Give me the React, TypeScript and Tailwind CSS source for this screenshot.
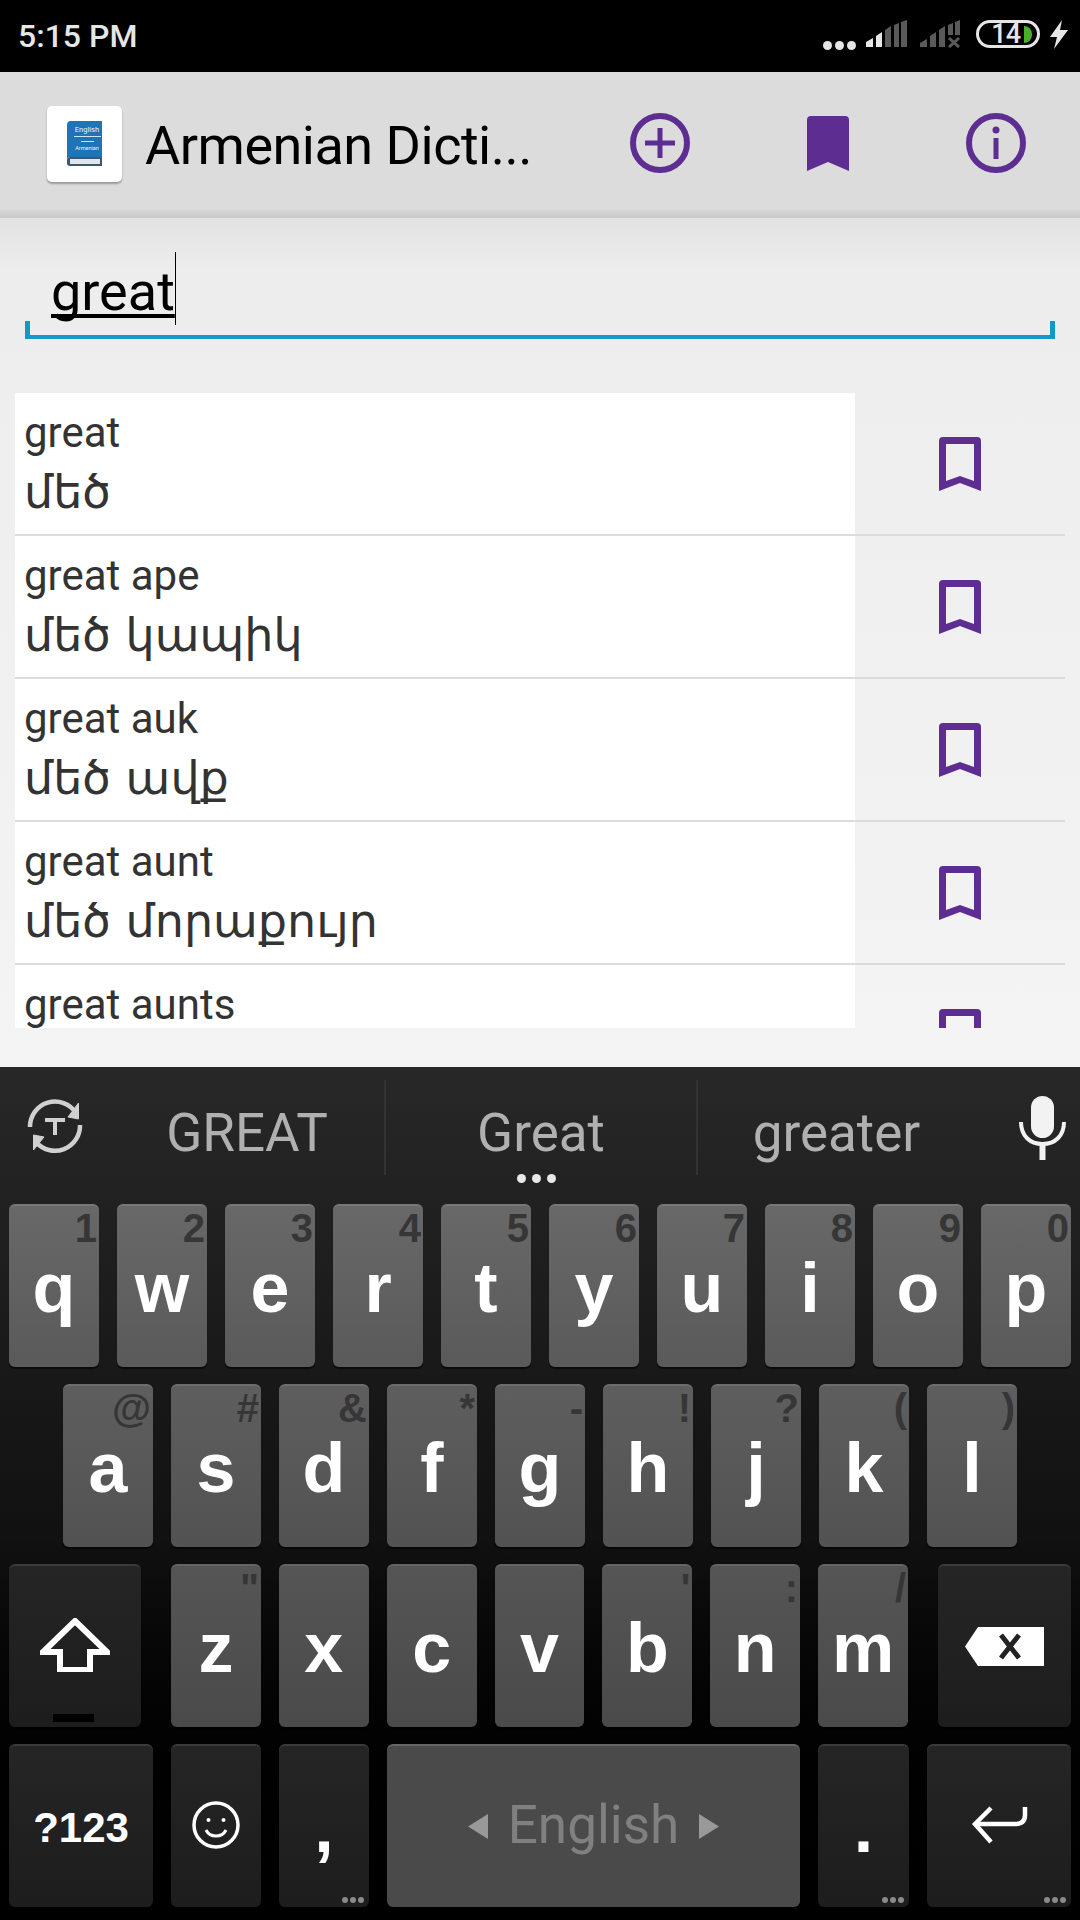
import React from 'react';

const entries = [
  { en: 'great', hy: 'մեծ' },
  { en: 'great ape', hy: 'մեծ կապիկ' },
  { en: 'great auk', hy: 'մեծ ավք' },
  { en: 'great aunt', hy: 'մեծ մորաքույր' },
  { en: 'great aunts', hy: '' },
];

const rowOne = [['q', '1'], ['w', '2'], ['e', '3'], ['r', '4'], ['t', '5'], ['y', '6'], ['u', '7'], ['i', '8'], ['o', '9'], ['p', '0']];
const rowTwo = [['a', '@'], ['s', '#'], ['d', '&'], ['f', '*'], ['g', '-'], ['h', '!'], ['j', '?'], ['k', '('], ['l', ')']];
const rowThree = [['z', '"'], ['x', ''], ['c', ''], ['v', ''], ['b', "'"], ['n', ':'], ['m', '/']];

const PURPLE = '#5e2d91';

function MoreDots() {
  return (
    <div className="absolute right-[5px] bottom-[4px] flex gap-[2px]">
      <span className="w-[6px] h-[6px] rounded-full bg-[#8a8a8a]" />
      <span className="w-[6px] h-[6px] rounded-full bg-[#8a8a8a]" />
      <span className="w-[6px] h-[6px] rounded-full bg-[#8a8a8a]" />
    </div>
  );
}

function LetterKey({ letter, alt, tone }: { letter: string; alt: string; tone: string }) {
  return (
    <div className={`relative flex-1 h-[163px] rounded-[6px] border-t-2 flex justify-center pt-[47px] shadow-[0_2px_1px_rgba(0,0,0,0.6)] ${tone}`}>
      <span className="text-[70px] leading-[70px] font-bold text-white font-['Liberation_Sans',sans-serif]">{letter}</span>
      {alt && (
        <span className="absolute top-[2px] right-[2px] text-[40px] leading-[40px] font-bold text-[#363636] font-['Liberation_Sans',sans-serif]">{alt}</span>
      )}
    </div>
  );
}

function DarkKey({ className, children }: { className: string; children: React.ReactNode }) {
  return (
    <div className={`relative h-[163px] rounded-[6px] border-t-2 border-[#3a3a3a] bg-linear-to-b from-[#252525] to-[#1d1d1d] flex justify-center shadow-[0_2px_1px_rgba(0,0,0,0.6)] ${className}`}>
      {children}
    </div>
  );
}

function BookIcon() {
  return (
    <svg width="36" height="46" viewBox="0 0 36 46">
      <path d="M4 0H35V36H3Q0 36 0 39V4Q0 0 4 0Z" fill="#1f74b8" />
      <path d="M0 39Q0 36 3 36H35V45H3Q0 45 0 42Z" fill="#41566a" />
      <rect x="3" y="38" width="30" height="5" fill="#dfe6ec" />
      <text x="20" y="11" fontSize="7.5" fill="#e8f2fa" textAnchor="middle" fontFamily="Roboto, sans-serif">English</text>
      <rect x="7" y="15" width="27" height="1" fill="#cfe4f5" />
      <rect x="14" y="20" width="13" height="1" fill="#cfe4f5" />
      <text x="20" y="29" fontSize="5.5" fill="#e8f2fa" textAnchor="middle" fontFamily="Roboto, sans-serif">Armenian</text>
    </svg>
  );
}

function StatusIcons() {
  return (
    <div className="flex items-center">
      <div className="flex gap-[3px] mt-[19px] mr-[10px]">
        <span className="w-[9px] h-[9px] rounded-full bg-[#e6e6e6]" />
        <span className="w-[9px] h-[9px] rounded-full bg-[#e6e6e6]" />
        <span className="w-[9px] h-[9px] rounded-full bg-[#e6e6e6]" />
      </div>
      <svg width="41" height="28" viewBox="0 0 41 28" className="mr-[13px] mt-[-4px]">
        <path d="M0 27V22L7 18V27Z" fill="#e6e6e6" />
        <path d="M10 27V16L16 12V27Z" fill="#e6e6e6" />
        <path d="M19 27V10L25 6V27Z" fill="#5a5a5a" />
        <path d="M28 27V5L33 3V27Z" fill="#5a5a5a" />
        <path d="M35 27V2L41 0V27Z" fill="#5a5a5a" />
      </svg>
      <svg width="40" height="28" viewBox="0 0 40 28" className="mr-[16px] mt-[-4px]">
        <path d="M0 27V23L7 19V27Z" fill="#5a5a5a" />
        <path d="M10 27V16L16 12V27Z" fill="#5a5a5a" />
        <path d="M19 27V10L25 6V27Z" fill="#5a5a5a" />
        <path d="M28 15V5L33 3V15Z" fill="#5a5a5a" />
        <path d="M35 15V2L40 0V15Z" fill="#5a5a5a" />
        <path d="M29 18L39 27M39 18L29 27" stroke="#5a5a5a" strokeWidth="3" />
      </svg>
      <div className="relative w-[64px] h-[28px] rounded-[14px] border-[3px] border-[#e6e6e6] mr-[10px] mt-[-4px] flex items-center justify-end pr-[5px]">
        <span className="text-[27px] leading-[22px] font-medium tracking-[-1px] text-[#e6e6e6] mr-[4px] font-['Roboto',sans-serif]">14</span>
        <span className="w-[8px] h-[17px] bg-[#4caf2c] rounded-r-[8px]" />
      </div>
      <svg width="18" height="29" viewBox="0 0 18 29" className="mt-[-4px]">
        <path d="M12 0L0 17H7L4 29L18 10H10Z" fill="#e6e6e6" />
      </svg>
    </div>
  );
}

export default function App() {
  return (
    <div className="w-[1080px] h-[1920px] flex flex-col overflow-hidden bg-black font-['Roboto',sans-serif]">
      {/* status bar */}
      <div className="h-[72px] shrink-0 bg-black flex items-center justify-between pl-[18px] pr-[12px]">
        <span className="text-[32px] leading-none font-medium text-[#e6e6e6]">5:15 PM</span>
        <StatusIcons />
      </div>

      {/* toolbar */}
      <div className="h-[138px] shrink-0 bg-[#dcdcdc] flex items-center pl-[47px]">
        <div className="w-[75px] h-[76px] rounded-[5px] bg-white shadow-[0_2px_2px_rgba(0,0,0,0.3)] flex items-center justify-center mt-[6px]">
          <BookIcon />
        </div>
        <span className="ml-[23px] w-[430px] text-[54px] leading-none tracking-[-0.5px] text-black mt-[10px]">Armenian Dicti...</span>
        <div className="flex items-center ml-[55px] gap-[117px] mt-[4px]">
          <svg width="60" height="60" viewBox="0 0 60 60">
            <circle cx="30" cy="30" r="27" fill="none" stroke={PURPLE} strokeWidth="6" />
            <path d="M30 15V45M15 30H45" stroke={PURPLE} strokeWidth="5" />
          </svg>
          <svg width="42" height="55" viewBox="0 0 42 55">
            <path d="M4 0H38Q42 0 42 4V55L21 46L0 55V4Q0 0 4 0Z" fill={PURPLE} />
          </svg>
          <svg width="60" height="60" viewBox="0 0 60 60">
            <circle cx="30" cy="30" r="27" fill="none" stroke={PURPLE} strokeWidth="6" />
            <path d="M30 25V46" stroke={PURPLE} strokeWidth="5" />
            <circle cx="30" cy="17" r="3.5" fill={PURPLE} />
          </svg>
        </div>
      </div>
      <div className="h-[8px] shrink-0 bg-linear-to-b from-[#d6d6d6] to-[#c8c8c8]" />

      {/* search + results */}
      <div className="flex-1 flex flex-col bg-linear-to-b from-[#e2e2e2] via-[#ededed] via-[6%] to-[#f4f4f4]">
        <div className="h-[175px] shrink-0 pt-[34px] px-[25px]">
          <div className="relative h-[87px] border-b-[4px] border-[#129ac4] pl-[26px] flex items-end">
            <span className="absolute left-0 bottom-0 w-[5px] h-[14px] bg-[#129ac4]" />
            <span className="absolute right-0 bottom-0 w-[5px] h-[14px] bg-[#129ac4]" />
            <span className="relative text-[54px] leading-[72px] text-black mb-[7px] underline decoration-[4px] underline-offset-[4px] [text-decoration-skip-ink:none]">
              great
              <span className="absolute right-[-1px] top-[-4px] h-[73px] w-[1px] bg-black" />
            </span>
          </div>
        </div>
        <div className="h-[635px] w-[1050px] ml-[15px] shrink-0 overflow-hidden">
          {entries.map((e) => (
            <div key={e.en} className="h-[143px] box-border border-b-2 border-[#dcdcdc] flex">
              <div className="w-[840px] bg-white pl-[9px] pt-[15px] text-[#333]">
                <div className="text-[42px] leading-[50px]">{e.en}</div>
                {e.hy && <div className="text-[46px] leading-[60px] mt-[4px] font-['DejaVu_Sans',sans-serif]">{e.hy}</div>}
              </div>
              <div className="flex-1 pt-[44px] pl-[84px]">
                <svg width="42" height="54" viewBox="0 0 42 54" fillRule="evenodd">
                  <path d="M4 0H38Q42 0 42 4V54L21 46L0 54V4Q0 0 4 0ZM7 7V44L21 39L35 44V7Z" fill={PURPLE} />
                </svg>
              </div>
            </div>
          ))}
        </div>
      </div>

      {/* keyboard */}
      <div className="h-[853px] shrink-0 flex flex-col bg-linear-to-b from-[#282828] via-[#111111] via-[55%] to-black">
        <div className="relative h-[137px] shrink-0 flex items-start pt-[13px]">
          <div className="w-[110px] h-[95px] pl-[25px] pt-[15px]">
            <svg width="60" height="60" viewBox="0 0 60 60" fill="none" stroke="#d0d0d0" strokeWidth="4.5">
              <path d="M5 32A25 25 0 0 1 51 18" />
              <path d="M53.5 8V24L43 22Z" fill="#d0d0d0" strokeWidth="1" />
              <path d="M55 30A25 25 0 0 1 11 47" />
              <path d="M8.5 40V55L19 42Z" fill="#d0d0d0" strokeWidth="1" />
              <path d="M20 25H40M30 25V40" strokeWidth="4" />
            </svg>
          </div>
          <div className="w-[274px] h-[95px] flex justify-center pt-[23px] text-[53px] leading-[60px] text-[#b0b0b0]">GREAT</div>
          <div className="w-[312px] h-[95px] border-l-2 border-[#333] flex justify-center pt-[23px] text-[53px] leading-[60px] text-[#b0b0b0]">Great</div>
          <div className="w-[279px] h-[95px] border-l-2 border-[#333] flex justify-center pt-[23px] text-[53px] leading-[60px] text-[#b0b0b0]">greater</div>
          <div className="pl-[44px] pt-[16px]">
            <svg width="47" height="64" viewBox="0 0 47 64">
              <rect x="12" y="0" width="23" height="42" rx="11.5" fill="#f2f2f2" />
              <path d="M2 26C2 40 11 48 23.5 48S45 40 45 26" fill="none" stroke="#f2f2f2" strokeWidth="4" />
              <path d="M23.5 47V64" stroke="#f2f2f2" strokeWidth="6" />
            </svg>
          </div>
          <div className="absolute left-[517px] top-[107px] flex gap-[6px]">
            <span className="w-[9px] h-[9px] rounded-full bg-[#e8e8e8]" />
            <span className="w-[9px] h-[9px] rounded-full bg-[#e8e8e8]" />
            <span className="w-[9px] h-[9px] rounded-full bg-[#e8e8e8]" />
          </div>
        </div>

        <div className="flex gap-[18px] px-[9px] mb-[17px]">
          {rowOne.map(([l, a]) => (
            <LetterKey key={l} letter={l} alt={a} tone="border-[#787878] bg-linear-to-b from-[#686868] to-[#5a5a5a]" />
          ))}
        </div>

        <div className="flex gap-[18px] px-[63px] mb-[17px]">
          {rowTwo.map(([l, a]) => (
            <LetterKey key={l} letter={l} alt={a} tone="border-[#6c6c6c] bg-linear-to-b from-[#5e5e5e] to-[#525252]" />
          ))}
        </div>

        <div className="flex gap-[18px] px-[9px] mb-[17px]">
          <DarkKey className="w-[132px] mr-[12px] items-center">
            <svg width="70" height="54" viewBox="0 0 70 54" className="mb-[4px]">
              <path d="M35 3L67 34H50V52H20V34H3Z" fill="none" stroke="#fff" strokeWidth="6" />
            </svg>
            <span className="absolute left-[44px] bottom-[5px] w-[41px] h-[8px] bg-black" />
          </DarkKey>
          <div className="flex-1 flex gap-[18px]">
            {rowThree.map(([l, a]) => (
              <LetterKey key={l} letter={l} alt={a} tone="border-[#646464] bg-linear-to-b from-[#555555] to-[#4a4a4a]" />
            ))}
          </div>
          <DarkKey className="w-[133px] ml-[12px] items-center">
            <svg width="79" height="39" viewBox="0 0 79 39">
              <path d="M13 0H79V39H13L0 19.5Z" fill="#fff" />
              <path d="M36 8L54 31M54 8L36 31" stroke="#222" strokeWidth="5" />
            </svg>
          </DarkKey>
        </div>

        <div className="flex gap-[18px] px-[9px]">
          <DarkKey className="w-[144px] pt-[57px]">
            <span className="text-[42px] leading-[50px] font-bold text-white font-['Liberation_Sans',sans-serif]">?123</span>
          </DarkKey>
          <DarkKey className="w-[90px] items-center">
            <svg width="48" height="48" viewBox="0 0 48 48" fill="none" stroke="#fff" className="mb-[4px]">
              <circle cx="24" cy="24" r="22" strokeWidth="3.5" />
              <circle cx="16.5" cy="19" r="2" fill="#fff" stroke="none" />
              <circle cx="31.5" cy="19" r="2" fill="#fff" stroke="none" />
              <path d="M14 29C18 37 30 37 34 29" strokeWidth="3" />
            </svg>
          </DarkKey>
          <DarkKey className="w-[90px] pt-[47px]">
            <span className="text-[70px] leading-[70px] font-bold text-white font-['Liberation_Sans',sans-serif]">,</span>
            <MoreDots />
          </DarkKey>
          <div className="w-[413px] h-[163px] rounded-[6px] border-t-2 border-[#666] bg-[#4a4a4a] flex items-center justify-center gap-[20px] shadow-[0_2px_1px_rgba(0,0,0,0.6)]">
            <svg width="20" height="25" viewBox="0 0 20 25"><path d="M20 0V25L0 12.5Z" fill="#999" /></svg>
            <span className="text-[53px] leading-[60px] text-[#808080] mb-[4px]">English</span>
            <svg width="20" height="25" viewBox="0 0 20 25"><path d="M0 0V25L20 12.5Z" fill="#999" /></svg>
          </div>
          <DarkKey className="w-[91px] pt-[47px]">
            <span className="text-[70px] leading-[70px] font-bold text-white font-['Liberation_Sans',sans-serif]">.</span>
            <MoreDots />
          </DarkKey>
          <DarkKey className="flex-1 items-center">
            <svg width="57" height="38" viewBox="0 0 57 38" fill="none" stroke="#fff" strokeWidth="4.5" className="mb-[4px]">
              <path d="M54 1V9Q54 18 44 18H5" />
              <path d="M20 2L4 18L20 36" />
            </svg>
            <MoreDots />
          </DarkKey>
        </div>
      </div>
    </div>
  );
}
